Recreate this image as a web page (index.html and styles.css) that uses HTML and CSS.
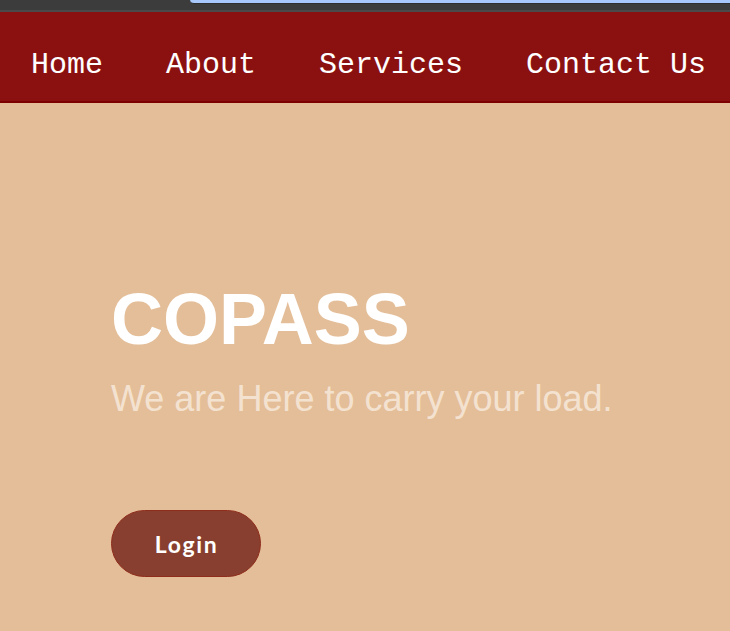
FILE: index.html
```html
<!DOCTYPE html>
<html lang="en">
<head>
<meta charset="utf-8">
<title>COPASS</title>
<link rel="stylesheet" href="styles.css">
</head>
<body>
<div class="chrome"><div class="chrome-tab"></div></div>
<nav class="nav">
  <a class="nav-link" href="#">Home</a>
  <a class="nav-link" href="#">About</a>
  <a class="nav-link" href="#">Services</a>
  <a class="nav-link" href="#">Contact Us</a>
</nav>
<main class="hero">
  <h1 class="hero-title">COPASS</h1>
  <p class="hero-sub">We are Here to carry your load.</p>
  <button class="login-btn" type="button">Login</button>
</main>
</body>
</html>
```

FILE: styles.css
```css
html, body {
  margin: 0;
  padding: 0;
}
body {
  background: #e4be98;
  height: 631px;
  overflow: hidden;
}
.chrome {
  height: 10px;
  background: #3c3c3c;
  border-bottom: 2px solid #4a4a4a;
  display: flex;
}
.chrome-tab {
  margin-left: 190px;
  flex: 1;
  height: 3px;
  background: #a8c7fa;
  border-bottom: 1px solid #2e2e2e;
  border-bottom-left-radius: 10px;
}
.nav {
  background: #8b1111;
  border-top: 1px solid #8b1111;
  border-bottom: 2px solid #7f0000;
  height: 91px;
  box-sizing: border-box;
  display: flex;
  gap: 63px;
  padding: 35px 0 0 31px;
  white-space: nowrap;
  overflow: hidden;
}
.nav-link {
  font-family: "Liberation Mono", "Courier New", monospace;
  font-size: 30px;
  color: #ffffff;
  text-decoration: none;
  line-height: 34px;
}
.hero {
  padding: 176px 0 0 111px;
  font-family: "Liberation Sans", Arial, sans-serif;
}
.hero-title {
  margin: 0;
  font-size: 72px;
  font-weight: bold;
  color: #ffffff;
  line-height: 80px;
}
.hero-sub {
  margin: 20px 0 0;
  font-size: 36px;
  color: #f4e2d1;
  line-height: 40px;
}
.login-btn {
  margin-top: 91px;
  width: 150px;
  height: 67px;
  border-radius: 34px;
  background: #883f30;
  border: 1px solid #8f2d1c;
  color: #ffffff;
  font-family: Lato, "Open Sans", sans-serif;
  font-weight: bold;
  font-size: 23px;
  letter-spacing: 1.6px;
  cursor: pointer;
  padding: 0 0 0 1px;
}
```
